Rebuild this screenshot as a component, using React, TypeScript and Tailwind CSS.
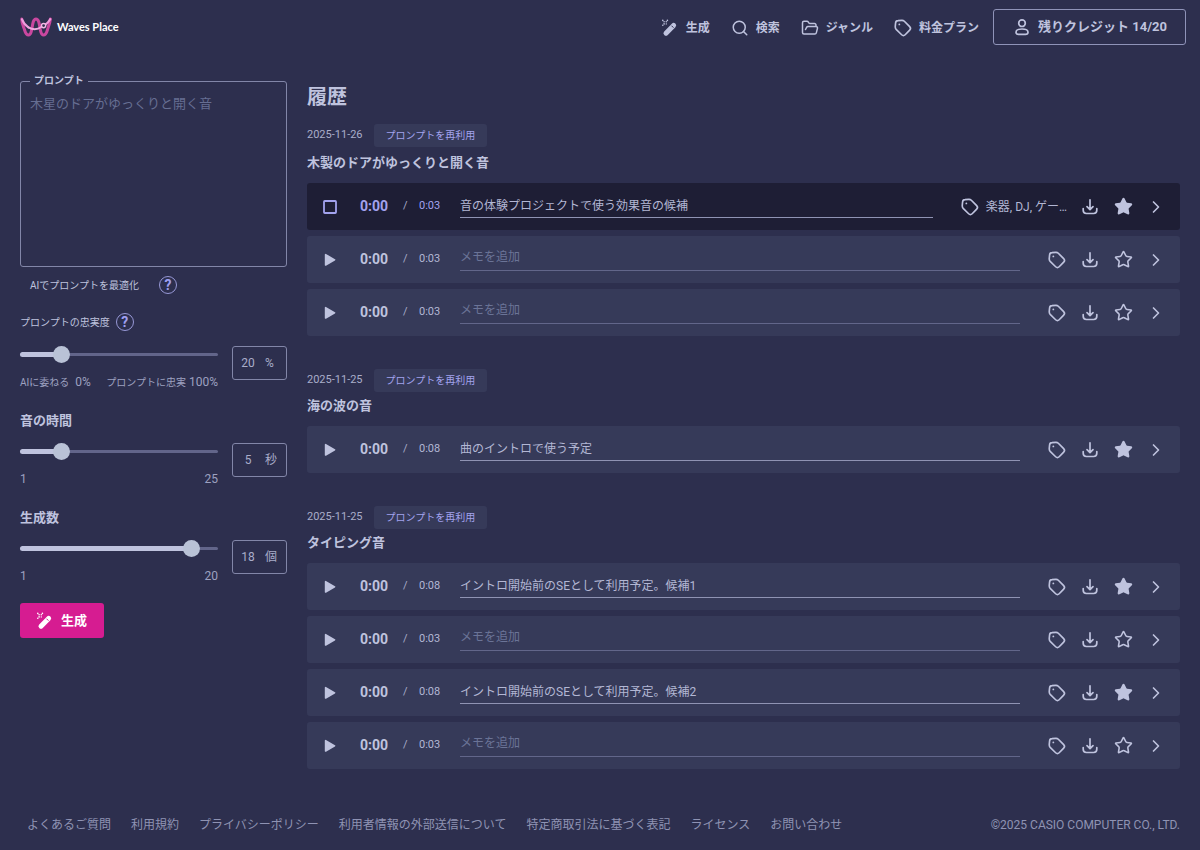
import { useState } from "react";
import type { ReactNode } from "react";
import { ChevronRight, FolderOpen, Search, Star } from "lucide-react";

type Track = {
  duration: string;
  memo?: string;
  tags?: string;
  starred?: boolean;
  active?: boolean;
};

type Group = {
  id: number;
  date: string;
  title: string;
  tracks: Track[];
};

const groups: Group[] = [
  {
    id: 1,
    date: "2025-11-26",
    title: "木製のドアがゆっくりと開く音",
    tracks: [
      {
        duration: "0:03",
        memo: "音の体験プロジェクトで使う効果音の候補",
        tags: "楽器, DJ, ゲー…",
        starred: true,
        active: true,
      },
      { duration: "0:03" },
      { duration: "0:03" },
    ],
  },
  {
    id: 2,
    date: "2025-11-25",
    title: "海の波の音",
    tracks: [{ duration: "0:08", memo: "曲のイントロで使う予定", starred: true }],
  },
  {
    id: 3,
    date: "2025-11-25",
    title: "タイピング音",
    tracks: [
      { duration: "0:08", memo: "イントロ開始前のSEとして利用予定。候補1", starred: true },
      { duration: "0:03" },
      { duration: "0:08", memo: "イントロ開始前のSEとして利用予定。候補2", starred: true },
      { duration: "0:03" },
    ],
  },
];

const footerLinks = [
  "よくあるご質問",
  "利用規約",
  "プライバシーポリシー",
  "利用者情報の外部送信について",
  "特定商取引法に基づく表記",
  "ライセンス",
  "お問い合わせ",
];

const Logo = () => (
  <svg viewBox="0 0 32 20" className="w-8 h-5" fill="none" strokeLinecap="round" strokeLinejoin="round" aria-hidden="true">
    <path
      d="M1.8 2C1.6 7 3.8 10 4.600 13c.8 3 1.800 5 4 5 4.600 0 2.400-16 7.400-16s2.800 16 7.400 16c2.200 0 3.200-2 4-5 .8-3 2.400-6 3-11"
      stroke="#c9479f"
      strokeWidth="3"
    />
    <path d="M2 2.400c1.400 3.600 3.600 6.200 6.400 8" stroke="#ee9bdc" strokeWidth="2.200" />
    <path d="M8.400 10.400c4.200 2.400 9 2.400 13.200-.6" stroke="#f0a8e0" strokeWidth="2" />
    <path d="M25.600 7.400c2-1.400 3.400-3.200 4.600-5.200" stroke="#ee9bdc" strokeWidth="2.200" />
    <circle cx="23.600" cy="8.600" r="2.100" className="fill-[#2d2f4e]" stroke="#f3b8e6" strokeWidth="1.400" />
  </svg>
);

const WandIcon = ({ slit }: { slit: string }) => (
  <svg viewBox="0 0 20 20" className="w-5 h-5" aria-hidden="true">
    <path d="M6 15.200 13.600 7.400" stroke="currentColor" strokeWidth="5" strokeLinecap="round" />
    <path d="m11.800 8 1.400 1.400" className={slit} strokeWidth="1" strokeLinecap="round" />
    <g fill="currentColor">
      <circle cx="2.800" cy="2.400" r="0.800" />
      <circle cx="7.400" cy="2.400" r="0.800" />
      <circle cx="4.100" cy="3.700" r="0.800" />
      <circle cx="6.300" cy="3.700" r="0.800" />
      <circle cx="4.100" cy="5.900" r="0.800" />
      <circle cx="6.300" cy="5.900" r="0.700" />
      <circle cx="2.800" cy="7.200" r="0.800" />
    </g>
  </svg>
);

const TagIcon = () => (
  <svg viewBox="0 0 24 24" className="w-5 h-5 shrink-0" fill="none" stroke="currentColor" strokeWidth="2" strokeLinejoin="round" aria-hidden="true">
    <path d="M6 3.200 10.400 2.800a4 4 0 0 1 3.200 1.100l6.400 6.500a3 3 0 0 1 0 4.200l-5.400 5.500a3 3 0 0 1-4.200 0L3.800 13.600a4 4 0 0 1-1.100-3.200L3.100 6A3.100 3.100 0 0 1 6 3.200Z" />
    <circle cx="7.600" cy="7.700" r="1.100" fill="currentColor" stroke="none" />
  </svg>
);

const UserIcon = () => (
  <svg viewBox="0 0 20 20" className="w-5 h-5" fill="none" stroke="currentColor" strokeWidth="1.700" aria-hidden="true">
    <circle cx="10" cy="6.200" r="3.300" />
    <path d="M10 12c3.600 0 6 1.300 6 3.200 0 1.500-1 2.200-2.500 2.200h-7C5 17.400 4 16.700 4 15.200 4 13.300 6.400 12 10 12Z" />
  </svg>
);

const DownloadIcon = () => (
  <svg viewBox="0 0 20 20" className="w-5 h-5" fill="none" stroke="currentColor" strokeWidth="1.700" strokeLinecap="round" strokeLinejoin="round" aria-hidden="true">
    <path d="M10 2.800v9.600M7 9.600l3 3 3-3" />
    <path d="M3.200 11.600v1.700a3.200 3.200 0 0 0 3.200 3.200h7.200a3.200 3.200 0 0 0 3.200-3.200v-1.700" />
  </svg>
);

const NavLink = ({ icon, label }: { icon: ReactNode; label: string }) => (
  <a href="#" className="flex items-center gap-1.5 text-[12px] font-bold hover:text-white">
    <span className="flex w-5 h-5 items-center justify-center">{icon}</span>
    {label}
  </a>
);

const HelpButton = ({ label }: { label: string }) => (
  <button
    aria-label={label}
    className="flex w-[18px] h-[18px] items-center justify-center rounded-full border border-[#9798d6] text-[14px] leading-none font-bold text-[#9f9ff0]"
  >
    ?
  </button>
);

type SliderFieldProps = {
  name: string;
  position: number;
  value: string;
  unit: string;
  min: ReactNode;
  max: ReactNode;
};

const SliderField = ({ name, position, value, unit, min, max }: SliderFieldProps) => {
  const [current, setCurrent] = useState(position);

  return (
    <div className="flex items-start gap-[14px]">
      <div className="flex-1">
        <div className="grid items-center h-[17px]">
          <div className="[grid-area:1/1] h-[3px] rounded-full bg-[#62658a]" />
          <div className="[grid-area:1/1] h-[5px] rounded-full bg-[#bfc3de]" style={{ width: `${current}%` }} />
          <input
            type="range"
            aria-label={name}
            value={current}
            onChange={(e) => setCurrent(Number(e.target.value))}
            className="[grid-area:1/1] w-full h-[17px] appearance-none bg-transparent [&::-webkit-slider-thumb]:appearance-none [&::-webkit-slider-thumb]:w-[17px] [&::-webkit-slider-thumb]:h-[17px] [&::-webkit-slider-thumb]:rounded-full [&::-webkit-slider-thumb]:bg-[#b9c2d6]"
          />
        </div>
        <div className="mt-[11px] flex justify-between text-[12px] leading-4 text-[#9da1c0]">
          <span>{min}</span>
          <span>{max}</span>
        </div>
      </div>
      <label className="flex w-[55px] h-[34px] items-center gap-[9px] rounded-[3px] border border-[#8286a8] pl-[7px] text-[12px] text-[#a9adca]">
        <input aria-label={`${name}の値`} defaultValue={value} className="w-4 bg-transparent text-center outline-none" />
        {unit}
      </label>
    </div>
  );
};

const TrackRow = ({ track }: { track: Track }) => (
  <li
    className={`flex h-[47px] items-center rounded-[3px] pl-[13px] pr-[14px] ${
      track.active ? "bg-[#1e1e35]" : "bg-[#363a59]"
    }`}
  >
    <button
      aria-label={track.active ? "停止" : "再生"}
      className={`mr-5 flex w-5 h-5 items-center justify-center ${track.active ? "text-[#a3a3ee]" : "text-[#bfc3de]"}`}
    >
      {track.active ? (
        <svg viewBox="0 0 14 14" className="w-[14px] h-[14px]" fill="none" stroke="currentColor" strokeWidth="1.800">
          <rect x="1" y="1" width="12" height="12" rx="0.800" />
        </svg>
      ) : (
        <svg viewBox="0 0 20 20" className="w-5 h-5" fill="currentColor">
          <path d="M4.800 4.600a.8.8 0 0 1 1.200-.7l9 5.300a.7.7 0 0 1 0 1.200l-9 5.300a.8.8 0 0 1-1.200-.7Z" />
        </svg>
      )}
    </button>
    <span className={`w-[43px] text-[14px] font-bold ${track.active ? "text-[#a3a3ee]" : "text-[#bfc3de]"}`}>0:00</span>
    <span className="w-4 text-[11px] text-[#a9adca]">/</span>
    <span className={`w-[41px] text-[11px] ${track.active ? "text-[#a3a3ee]" : "text-[#b3b7d4]"}`}>{track.duration}</span>
    <input
      aria-label="メモ"
      placeholder="メモを追加"
      defaultValue={track.memo}
      className={`mr-[27px] h-[22px] min-w-0 flex-1 border-b bg-transparent pb-1 text-[12px] text-[#b3b7d4] placeholder:text-[#6b7497] outline-none ${
        track.memo ? "border-[#8f93b3]" : "border-[#62668a]"
      }`}
    />
    <div className="flex items-center gap-[13px] text-[#bfc3de]">
      <button aria-label="タグ" className="flex items-center gap-1.5">
        <TagIcon />
        {track.tags && (
          <span className="min-w-[81px] text-left text-[12px] whitespace-nowrap text-[#b3b7d4]">{track.tags}</span>
        )}
      </button>
      <button aria-label="ダウンロード">
        <DownloadIcon />
      </button>
      <button aria-label="お気に入り" className="flex w-5 justify-center">
        <Star size={19} fill={track.starred ? "currentColor" : "none"} />
      </button>
      <button aria-label="詳細">
        <ChevronRight size={20} />
      </button>
    </div>
  </li>
);

export default function App() {
  return (
    <div
      lang="ja"
      className="flex min-h-screen flex-col bg-[#2d2f4e] font-['Roboto','Noto_Sans_CJK_JP',sans-serif] text-[#bfc3de]"
    >
      <header className="flex h-[54px] items-center justify-between pl-5 pr-[14px]">
        <a href="#" className="flex items-center gap-[5px]">
          <Logo />
          <span className="font-['Lato',sans-serif] text-[11px] font-bold text-white">Waves Place</span>
        </a>
        <div className="flex items-center gap-[14px]">
          <nav className="flex items-center gap-5 pt-0.5">
            <NavLink icon={<WandIcon slit="stroke-[#2d2f4e]" />} label="生成" />
            <NavLink icon={<Search size={18} />} label="検索" />
            <NavLink icon={<FolderOpen size={18} />} label="ジャンル" />
            <NavLink icon={<TagIcon />} label="料金プラン" />
          </nav>
          <button className="flex h-9 items-center gap-1.5 rounded-[3px] border border-[#8f93b8] px-[18px] text-[13px] font-bold">
            <UserIcon />
            残りクレジット 14/20
          </button>
        </div>
      </header>

      <div className="flex flex-1 gap-5 px-5 pt-5">
        {/* 生成フォーム */}
        <aside className="w-[267px] shrink-0">
          <fieldset className="h-[193px] rounded-[3px] border border-[#8286a8] px-[9px]">
            <legend className="px-1 text-[10px] leading-[14px] font-bold">プロンプト</legend>
            <textarea
              aria-label="プロンプト"
              placeholder="木星のドアがゆっくりと開く音"
              className="mt-1.5 block h-[160px] w-full resize-none bg-transparent text-[13px] leading-5 placeholder:text-[#666e92] outline-none"
            />
          </fieldset>

          <div className="mt-[9px] flex h-[18px] items-center gap-5 pl-[10px] text-[10px]">
            AIでプロンプトを最適化
            <HelpButton label="最適化のヘルプ" />
          </div>
          <div className="mt-[19px] flex h-[18px] items-center gap-1.5 text-[10px]">
            プロンプトの忠実度
            <HelpButton label="忠実度のヘルプ" />
          </div>
          <div className="mt-[15px]">
            <SliderField
              name="プロンプトの忠実度"
              position={18}
              value="20"
              unit="%"
              min={
                <>
                  <span className="mr-1.5 text-[10px]">AIに委ねる</span>0%
                </>
              }
              max={
                <>
                  <span className="text-[10px]">プロンプトに忠実</span> 100%
                </>
              }
            />
          </div>

          <h2 className="mt-[21px] mb-[13px] text-[13px] leading-[18px] font-bold">音の時間</h2>
          <SliderField name="音の時間" position={18} value="5" unit="秒" min="1" max="25" />

          <h2 className="mt-[22px] mb-[13px] text-[13px] leading-[18px] font-bold">生成数</h2>
          <SliderField name="生成数" position={90} value="18" unit="個" min="1" max="20" />

          <button className="mt-[19px] flex h-[35px] items-center gap-1.5 rounded-[3px] bg-[#d61c91] pl-[15px] pr-[17px] text-[13px] font-bold text-white">
            <WandIcon slit="stroke-[#d61c91]" />
            生成
          </button>
        </aside>

        {/* 履歴 */}
        <main className="min-w-0 flex-1 pt-[9px]">
          <h1 className="mb-[13px] text-[20px] leading-7 font-bold">履歴</h1>
          <div className="space-y-[33px]">
            {groups.map((group) => (
              <section key={group.id} className="group">
                <div className="flex items-center gap-[11px]">
                  <time className="text-[11px] text-[#a9adca]">{group.date}</time>
                  <button className="h-[23px] rounded-[3px] bg-[#363a59] px-3 text-[10px] text-[#a3a3ee]">
                    プロンプトを再利用
                  </button>
                </div>
                <h2 className="mt-[5px] mb-[11px] text-[13px] leading-[18px] font-bold group-first:mt-[7px]">
                  {group.title}
                </h2>
                <ul className="space-y-1.5">
                  {group.tracks.map((track, i) => (
                    <TrackRow key={i} track={track} />
                  ))}
                </ul>
              </section>
            ))}
          </div>
        </main>
      </div>

      <footer className="flex items-center justify-between pt-5 pb-4 pl-[27px] pr-5 text-[12px] leading-[18px] text-[#8f93b3]">
        <ul className="flex gap-5">
          {footerLinks.map((label) => (
            <li key={label}>
              <a href="#" className="hover:text-white">
                {label}
              </a>
            </li>
          ))}
        </ul>
        <small className="text-[12px]">©2025 CASIO COMPUTER CO., LTD.</small>
      </footer>
    </div>
  );
}
